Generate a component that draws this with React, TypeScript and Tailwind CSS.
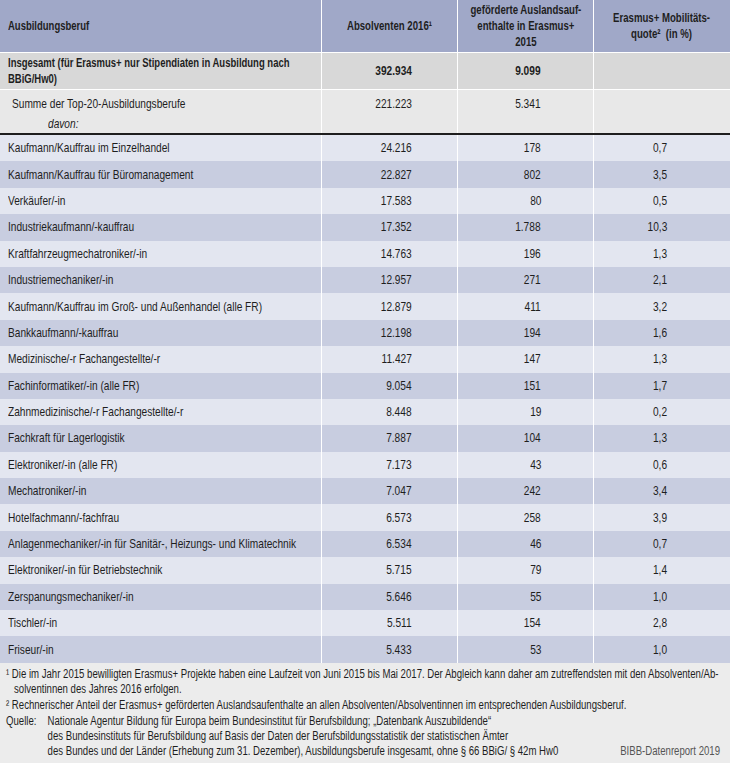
import React from "react";

const rows: [string, string, string, string][] = [
  ["Kaufmann/Kauffrau im Einzelhandel", "24.216", "178", "0,7"],
  ["Kaufmann/Kauffrau für Büromanagement", "22.827", "802", "3,5"],
  ["Verkäufer/-in", "17.583", "80", "0,5"],
  ["Industriekaufmann/-kauffrau", "17.352", "1.788", "10,3"],
  ["Kraftfahrzeugmechatroniker/-in", "14.763", "196", "1,3"],
  ["Industriemechaniker/-in", "12.957", "271", "2,1"],
  ["Kaufmann/Kauffrau im Groß- und Außenhandel (alle FR)", "12.879", "411", "3,2"],
  ["Bankkaufmann/-kauffrau", "12.198", "194", "1,6"],
  ["Medizinische/-r Fachangestellte/-r", "11.427", "147", "1,3"],
  ["Fachinformatiker/-in (alle FR)", "9.054", "151", "1,7"],
  ["Zahnmedizinische/-r Fachangestellte/-r", "8.448", "19", "0,2"],
  ["Fachkraft für Lagerlogistik", "7.887", "104", "1,3"],
  ["Elektroniker/-in (alle FR)", "7.173", "43", "0,6"],
  ["Mechatroniker/-in", "7.047", "242", "3,4"],
  ["Hotelfachmann/-fachfrau", "6.573", "258", "3,9"],
  ["Anlagenmechaniker/-in für Sanitär-, Heizungs- und Klimatechnik", "6.534", "46", "0,7"],
  ["Elektroniker/-in für Betriebstechnik", "5.715", "79", "1,4"],
  ["Zerspanungsmechaniker/-in", "5.646", "55", "1,0"],
  ["Tischler/-in", "5.511", "154", "2,8"],
  ["Friseur/-in", "5.433", "53", "1,0"],
];

const font = {
  fontFamily: '"Liberation Sans", Arial, sans-serif',
};

// Narrow text: Liberation Sans horizontally condensed (like Arial Narrow)
function L({ children, bold = false }: { children: React.ReactNode; bold?: boolean }) {
  return (
    <span className={bold ? "inline-block whitespace-nowrap origin-left scale-x-[0.73]" : "inline-block whitespace-nowrap origin-left scale-x-[0.78]"}>
      {children}
    </span>
  );
}
function R({ children, bold = false }: { children: React.ReactNode; bold?: boolean }) {
  return (
    <span className={bold ? "inline-block whitespace-nowrap origin-right scale-x-[0.78]" : "inline-block whitespace-nowrap origin-right scale-x-[0.78]"}>
      {children}
    </span>
  );
}
function C({ children }: { children: React.ReactNode }) {
  return <span className="inline-block whitespace-nowrap origin-center scale-x-[0.74] text-center">{children}</span>;
}

const grid = "grid grid-cols-[321px_135px_135px_1fr] gap-x-px bg-white";

export default function App() {
  return (
    <div className="w-[730px] h-[763px] bg-[#ececec] text-[#1e1e1e] overflow-hidden" style={font}>
      {/* header */}
      <div className={`${grid} h-[52px] font-bold text-[13px] leading-[16px]`}>
        <div className="bg-[#a0a8c8] flex items-center pl-2">
          <L bold>Ausbildungsberuf</L>
        </div>
        <div className="bg-[#a0a8c8] flex items-center justify-center">
          <C>Absolventen 2016¹</C>
        </div>
        <div className="bg-[#a0a8c8] flex items-center justify-center">
          <C>
            geförderte Auslandsauf-
            <br />
            enthalte in Erasmus+
            <br />
            2015
          </C>
        </div>
        <div className="bg-[#a0a8c8] flex items-center justify-center">
          <C>
            Erasmus+ Mobilitäts-
            <br />
            quote²&nbsp; (in %)
          </C>
        </div>
      </div>
      <div className="h-px bg-white" />
      {/* Insgesamt */}
      <div className={`${grid} h-[36px] font-bold text-[13px] leading-[16px]`}>
        <div className="bg-[#d8d8d8] flex items-center pl-2">
          <L bold>
            Insgesamt (für Erasmus+ nur Stipendiaten in Ausbildung nach
            <br />
            BBiG/Hw0)
          </L>
        </div>
        <div className="bg-[#d8d8d8] flex items-center justify-end pr-[45px]">
          <R bold>392.934</R>
        </div>
        <div className="bg-[#d8d8d8] flex items-center justify-end pr-[52px]">
          <R bold>9.099</R>
        </div>
        <div className="bg-[#d8d8d8]" />
      </div>
      <div className="h-px bg-white" />
      {/* Summe */}
      <div className={`${grid} h-[43px] text-[13px] leading-[16px]`}>
        <div className="bg-[#e8e8e8] pl-3 pt-[6px] flex flex-col items-start">
          <L>Summe der Top-20-Ausbildungsberufe</L>
          <span className="pl-[36px] pt-[4px] italic">
            <L>davon:</L>
          </span>
        </div>
        <div className="bg-[#e8e8e8] flex items-start justify-end pr-[45px] pt-[6px]">
          <R>221.223</R>
        </div>
        <div className="bg-[#e8e8e8] flex items-start justify-end pr-[52px] pt-[6px]">
          <R>5.341</R>
        </div>
        <div className="bg-[#e8e8e8]" />
      </div>
      <div className="h-[2px] bg-[#1e1e1e]" />
      {/* data rows */}
      <div className="flex flex-col">
        {rows.map((r, i) => {
          const bg = i % 2 === 0 ? "bg-[#e3e6f0]" : "bg-[#c8cde0]";
          return (
            <div key={i} className={`${grid} h-[26.4px] text-[13px] leading-[16px]`}>
              <div className={`${bg} flex items-center pl-2`}>
                <L>{r[0]}</L>
              </div>
              <div className={`${bg} flex items-center justify-end pr-[45px]`}>
                <R>{r[1]}</R>
              </div>
              <div className={`${bg} flex items-center justify-end pr-[52px]`}>
                <R>{r[2]}</R>
              </div>
              <div className={`${bg} flex items-center justify-end pr-[63px]`}>
                <R>{r[3]}</R>
              </div>
            </div>
          );
        })}
      </div>
      {/* footer (condensed as a whole) */}
      <div className="w-[912px] origin-left scale-x-[0.8] pl-[7.5px] pr-[12px] pt-[4.5px] text-[12px] leading-[15px] whitespace-nowrap">
        <div>¹ Die im Jahr 2015 bewilligten Erasmus+ Projekte haben eine Laufzeit von Juni 2015 bis Mai 2017. Der Abgleich kann daher am zutreffendsten mit den Absolventen/Ab-</div>
        <div className="pl-[10px]">solventinnen des Jahres 2016 erfolgen.</div>
        <div className="pt-[1px]">² Rechnerischer Anteil der Erasmus+ geförderten Auslandsaufenthalte an allen Absolventen/Absolventinnen im entsprechenden Ausbildungsberuf.</div>
        <div className="flex pt-[1px]">
          <div className="w-[52px] shrink-0">Quelle:</div>
          <div className="flex-1">
            <div>Nationale Agentur Bildung für Europa beim Bundesinstitut für Berufsbildung; „Datenbank Auszubildende“</div>
            <div>des Bundesinstituts für Berufsbildung auf Basis der Daten der Berufsbildungsstatistik der statistischen Ämter</div>
            <div className="flex justify-between">
              <span>des Bundes und der Länder (Erhebung zum 31. Dezember), Ausbildungsberufe insgesamt, ohne § 66 BBiG/ § 42m Hw0</span>
              <span className="text-[#555]">BIBB-Datenreport 2019</span>
            </div>
          </div>
        </div>
      </div>
    </div>
  );
}
